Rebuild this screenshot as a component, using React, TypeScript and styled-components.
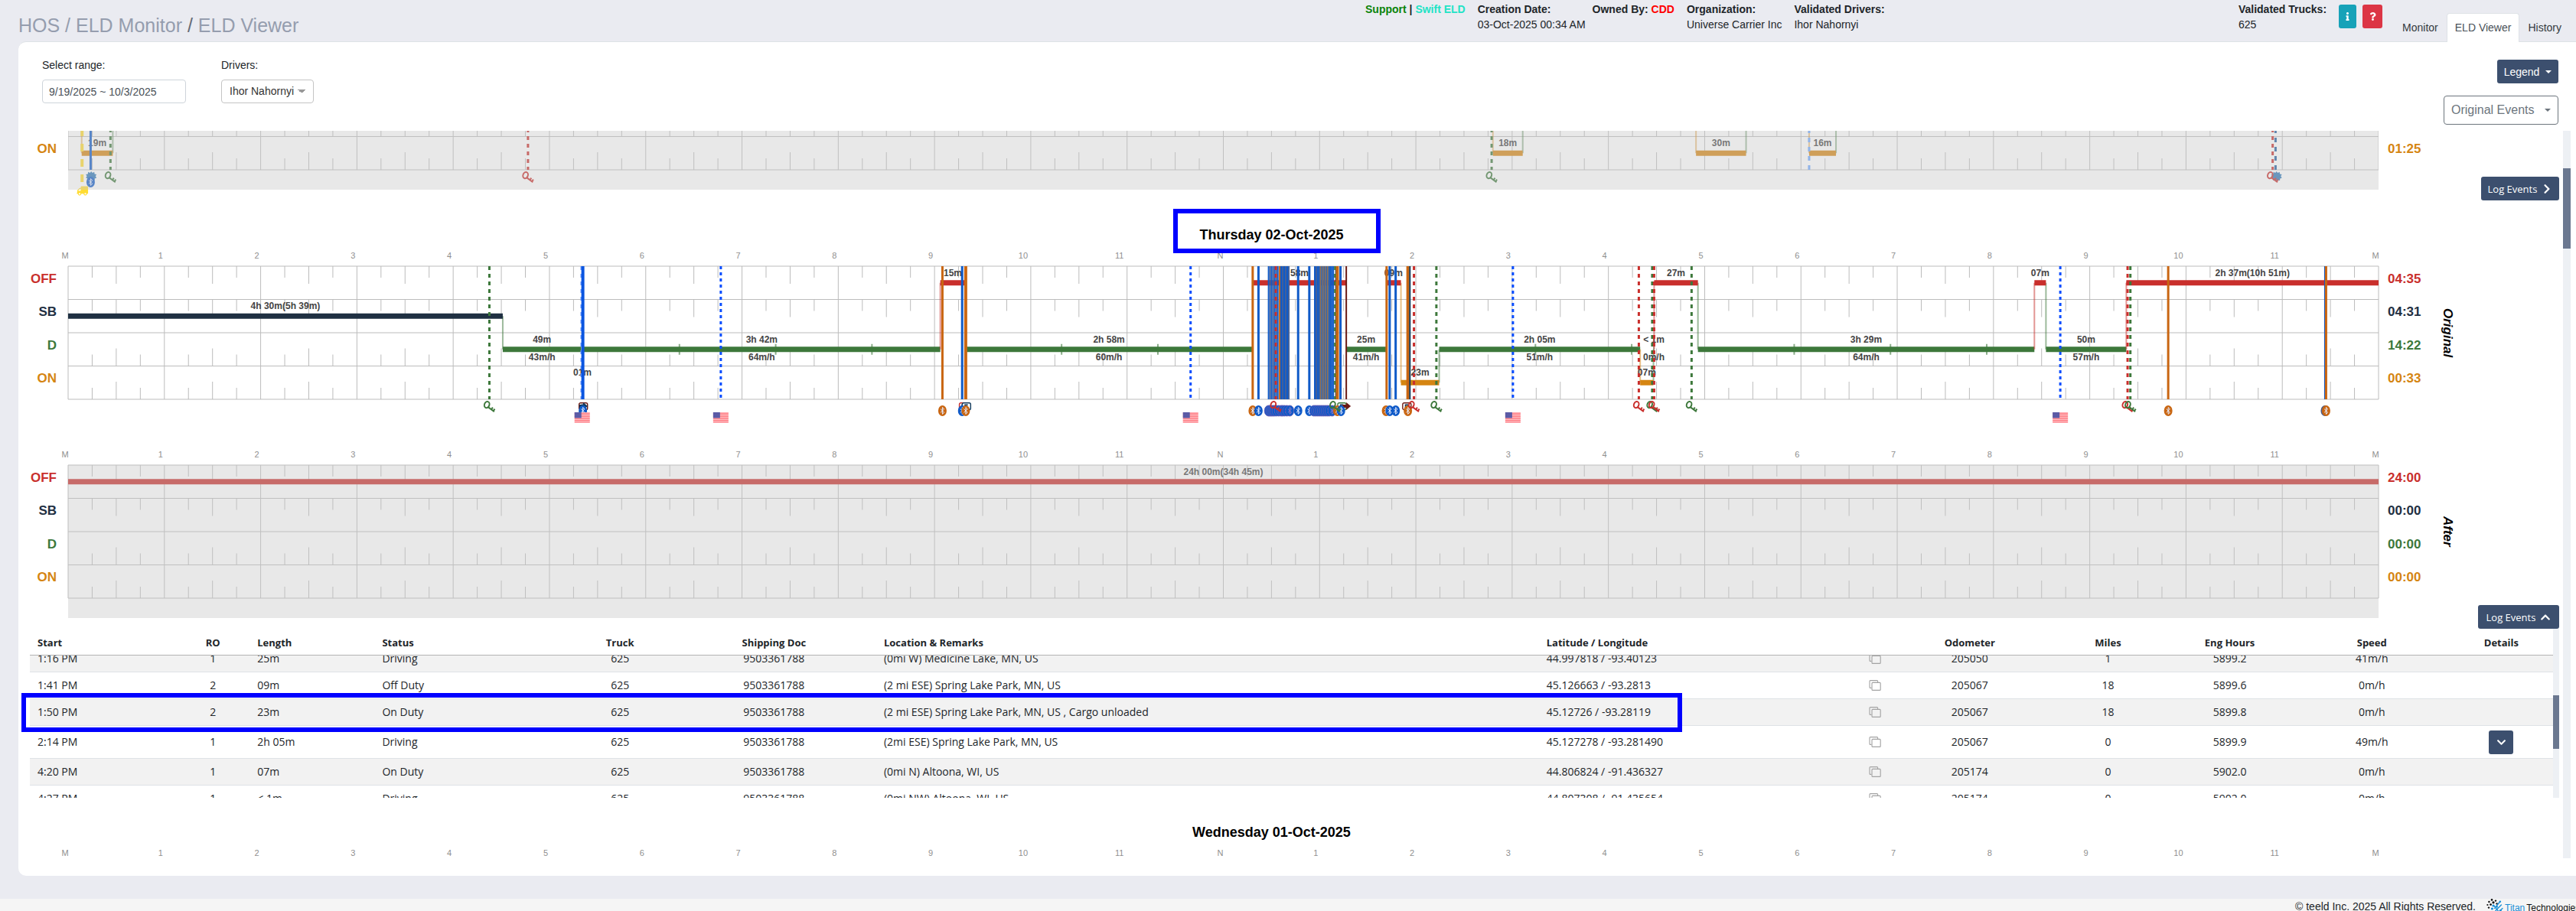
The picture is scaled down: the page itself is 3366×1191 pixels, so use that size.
import React, { useEffect, useRef } from "react";
import styled, { createGlobalStyle } from "styled-components";
import { FaChevronDown, FaChevronRight, FaChevronUp, FaInfo, FaQuestion, FaTruck } from "react-icons/fa";

const ARIAL = '"Liberation Sans", Arial, sans-serif';
const SANS = '"Open Sans", "Noto Sans", sans-serif';

const C = {
  off: "#c92f2c",
  sb: "#1f3042",
  d: "#3d783b",
  on: "#d58512",
  blue: "#0f5ac8",
  bright: "#0a4dff",
  orange: "#c96612",
  navy: "#123a5c",
  maroon: "#6b1a14",
  yellow: "#ffdc32",
  steel: "#1f5c9e",
  btn: "#3c4f6e",
};

const Global = createGlobalStyle`
  * { box-sizing: border-box; }
  html, body { margin: 0; overflow: hidden; }
  body { background: #eaebf1; color: #212529; font: 14px/20px ${ARIAL}; }
  button, input, select { font: inherit; color: inherit; margin: 0; }
`;

/* ---------- page frame ---------- */

const Page = styled.div`
  height: 100vh;
  overflow: hidden;
`;

const Header = styled.header`
  display: flex;
  height: 55px;
  padding: 0 8px 0 24px;
`;

const Crumbs = styled.nav`
  flex: 0 1 calc(53% - 7px);
  padding-top: 18px;
  font-size: 25px;
  line-height: 30px;
  color: #666b76;
  white-space: nowrap;
  a { color: #959dae; text-decoration: none; }
`;

const Info = styled.div<{ $gap?: number }>`
  padding-top: 2px;
  margin-right: ${(p) => p.$gap ?? 16}px;
  white-space: nowrap;
`;

const Strong = styled.div`
  font-weight: 700;
`;

const Tint = styled.span<{ $color: string }>`
  color: ${(p) => p.$color};
`;

const HeaderRight = styled.div`
  display: flex;
  margin-left: auto;
`;

const HelpButtons = styled.div`
  display: flex;
  gap: 8px;
  padding-top: 6px;
  margin-right: 15px;
`;

const HelpButton = styled.button<{ $bg: string; $w: number }>`
  display: flex;
  align-items: center;
  justify-content: center;
  width: ${(p) => p.$w}px;
  height: 31px;
  padding: 0;
  border: 0;
  border-radius: 3px;
  background: ${(p) => p.$bg};
  color: #fff;
  font-size: 11px;
`;

const Tabs = styled.nav`
  position: relative;
  z-index: 1;
  display: flex;
  padding-top: 17px;
`;

const Tab = styled.a<{ $active?: boolean }>`
  height: 38px;
  padding: 8px 10px;
  border: 1px solid ${(p) => (p.$active ? "#dee2e6" : "transparent")};
  border-bottom: 0;
  border-radius: 4px 4px 0 0;
  background: ${(p) => (p.$active ? "#fff" : "transparent")};
  color: ${(p) => (p.$active ? "#495057" : "#343a40")};
  text-decoration: none;
  white-space: nowrap;
`;

const Card = styled.main`
  margin: -1px 0 0 24px;
  padding: 23px 7px 23px 0;
  border-top: 1px solid #dee2e6;
  border-radius: 10px 0 0 10px;
  background: #fff;
`;

const Controls = styled.div`
  display: flex;
  align-items: flex-start;
  gap: 46px;
  height: 93px;
  padding: 0 16px 0 31px;
`;

const Field = styled.label`
  display: flex;
  flex-direction: column;
  align-items: flex-start;
  gap: 11px;
  line-height: 15px;
`;

const RangeInput = styled.input`
  width: 188px;
  height: 31px;
  padding: 0 8px;
  border: 1px solid #ced4da;
  border-radius: 4px;
  background: #fff;
  color: #495057;
`;

const DriverSelect = styled.select`
  appearance: none;
  width: 121px;
  height: 31px;
  padding: 0 20px 0 10px;
  border: 1px solid #c4c4c4;
  border-radius: 4px;
  background-color: #fff;
  background-image: linear-gradient(to top right, transparent 50%, #999 50%),
    linear-gradient(to top left, transparent 50%, #999 50%);
  background-repeat: no-repeat;
  background-position: right 15px center, right 10px center;
  background-size: 5px 5px;
  color: #333;
`;

const ControlButtons = styled.div`
  display: flex;
  flex-direction: column;
  align-items: flex-end;
  gap: 16px;
  margin-left: auto;
`;

const Button = styled.button`
  display: flex;
  align-items: center;
  justify-content: center;
  gap: 8px;
  height: 31px;
  padding: 0 9px;
  border: 0;
  border-radius: 3px;
  background: ${C.btn};
  color: #fff;
  white-space: nowrap;
`;

const LegendButton = styled(Button)`
  width: 80px;
`;

const LogButton = styled(Button)<{ $w: number }>`
  width: ${(p) => p.$w}px;
  padding: 0;
  font: 13px/20px ${SANS};
  gap: 6px;
`;

const RowButton = styled(Button)`
  display: inline-flex;
  width: 32px;
  padding: 0;
  vertical-align: middle;
`;

const OutlineButton = styled(Button)`
  width: 150px;
  height: 38px;
  justify-content: space-between;
  border: 1px solid #6c757d;
  border-radius: 4px;
  background: #fff;
  color: #6c757d;
  font-size: 16px;
`;

const Caret = styled.span`
  border: 4px solid transparent;
  border-top-color: currentColor;
  border-bottom: 0;
`;

/* ---------- scrolling list of days ---------- */

const Scroller = styled.section`
  display: flex;
  height: calc(100vh - 240px);
  overflow: hidden;
`;

const Days = styled.div`
  flex: 1;
  min-width: 0;
  padding: 0 5px 0 15px;
`;

const Track = styled.div<{ $w: number }>`
  flex: none;
  width: ${(p) => p.$w}px;
  background: #edf0f4;
`;

const Thumb = styled.div<{ $top: number; $h: number }>`
  height: ${(p) => p.$h}px;
  margin-top: ${(p) => p.$top}px;
  background: #6b7890;
`;

const TitleRow = styled.div`
  display: flex;
  justify-content: center;
  padding: 33px 60px 7px 0;
`;

const DayTitle = styled.h2`
  position: relative;
  margin: 0;
  font-size: 18px;
  line-height: 24px;
  color: #000;
`;

const TitleMark = styled.div`
  position: absolute;
  inset: -22px -48px -12px -34px;
  border: 6px solid #0000ff;
`;

const Grid = styled.div<{ $gap?: number }>`
  display: grid;
  grid-template-columns: 50px minmax(0, 1fr) 236px;
  margin-bottom: ${(p) => p.$gap ?? 0}px;
`;

const HourAxis = styled.svg`
  grid-column: 2;
  display: block;
  width: 100%;
  height: 22px;
  overflow: visible;
  font: 11px ${ARIAL};
  fill: #8f8f8f;
`;

const Labels = styled.div<{ $h: number; $pad?: number }>`
  display: grid;
  grid-auto-rows: 1fr;
  grid-column: 1;
  height: ${(p) => p.$h}px;
  padding: ${(p) => p.$pad ?? 0}px 15px 0 0;
`;

const Totals = styled(Labels)`
  padding-right: 0;
  padding-left: 12px;
  width: 82px;
`;

const RowLabel = styled.span<{ $color: string }>`
  display: flex;
  align-items: center;
  margin-left: auto;
  padding-bottom: 10px;
  font-size: 17px;
  font-weight: 700;
  color: ${(p) => p.$color};
`;

const TotalLabel = styled(RowLabel)`
  margin-left: 0;
`;

const Side = styled.div`
  display: flex;
`;

const Vertical = styled.em<{ $h: number }>`
  display: flex;
  align-items: center;
  justify-content: center;
  height: ${(p) => p.$h}px;
  width: 16px;
  writing-mode: vertical-rl;
  font-size: 17px;
  font-weight: 700;
  color: #000;
`;

const SideEnd = styled.div`
  display: flex;
  align-items: flex-end;
  margin-left: auto;
`;

const ChartSvg = styled.svg<{ $h: number; $clip?: boolean }>`
  display: block;
  width: 100%;
  height: ${(p) => p.$h}px;
  overflow: ${(p) => (p.$clip ? "hidden" : "visible")};
  font: 700 12px ${ARIAL};
`;

/* ---------- chart ---------- */

const ROW = 174 / 4;
const pct = (h: number) => `${(h / 24) * 100}%`;
type Status = "off" | "sb" | "d" | "on";
const order: Status[] = ["off", "sb", "d", "on"];
const yOf = (s: Status) => (order.indexOf(s) + 0.5) * ROW;

type Segment = { s: Status; a: number; b: number; label?: string; speed?: string; from?: Status; to?: Status };
type VLine = { h: number; c: string; w?: number; dash?: string; end?: number };
type Mark = { h: number; k: "key" | "bt" | "flag" | "cam" | "arrow" | "burst" | "truck"; c?: string; y?: number };

const hourNames = ["M", "1", "2", "3", "4", "5", "6", "7", "8", "9", "10", "11", "N", "1", "2", "3", "4", "5", "6", "7", "8", "9", "10", "11", "M"];

const Hours = () => (
  <HourAxis>
    {hourNames.map((n, i) => (
      <text key={i} x={pct(i)} dx={/\d/.test(n) ? -5 * n.length : -4} y={12} textAnchor="middle">
        {n}
      </text>
    ))}
  </HourAxis>
);

const Backdrop = () => (
  <g stroke="#bcbcbc">
    {[0, 1, 2, 3, 4].map((r) => (
      <line key={r} x1="0" x2="100%" y1={r * ROW} y2={r * ROW} />
    ))}
    {Array.from({ length: 97 }, (_, q) => {
      const x = pct(q / 4);
      if (q % 4 === 0) return <line key={q} x1={x} x2={x} y1={0} y2={174} />;
      const len = q % 2 === 0 ? 23 : 15;
      return (
        <React.Fragment key={q}>
          {[0, 1].map((r) => (
            <line key={r} x1={x} x2={x} y1={r * ROW} y2={r * ROW + len} />
          ))}
          {[3, 4].map((r) => (
            <line key={r} x1={x} x2={x} y1={r * ROW} y2={r * ROW - len} />
          ))}
        </React.Fragment>
      );
    })}
  </g>
);

const Segments = ({ items }: { items: Segment[] }) => (
  <>
    {items.map((g, i) => {
      const y = yOf(g.s);
      const mid = pct((g.a + g.b) / 2);
      const notches = [];
      if (g.s === "d") for (let n = g.a + 1; n < g.b - 0.05; n += 1) notches.push(n);
      return (
        <g key={i}>
          {g.from && (
            <line x1={pct(g.a)} x2={pct(g.a)} y1={yOf(g.from)} y2={y} stroke={C[g.s]} strokeWidth={2} opacity={0.5} />
          )}
          {g.to && (
            <line x1={pct(g.b)} x2={pct(g.b)} y1={yOf(g.to)} y2={y} stroke={C[g.to]} strokeWidth={2} opacity={0.5} />
          )}
          {notches.map((n) => (
            <line key={n} x1={pct(n)} x2={pct(n)} y1={y - 7} y2={y + 7} stroke={C.d} strokeWidth={2} opacity={0.6} />
          ))}
          <line x1={pct(g.a)} x2={pct(g.b)} y1={y} y2={y} stroke={C[g.s]} strokeWidth={7} />
          {g.label && (
            <text x={mid} y={y - 9} textAnchor="middle" fill="#444">
              {g.label}
            </text>
          )}
          {g.speed && (
            <text x={mid} y={y + 14} textAnchor="middle" fill="#444">
              {g.speed}
            </text>
          )}
        </g>
      );
    })}
  </>
);

const VLines = ({ items }: { items: VLine[] }) => (
  <>
    {items.map((l, i) => (
      <line
        key={i}
        x1={pct(l.h)}
        x2={pct(l.h)}
        y1={0}
        y2={l.end ?? 174}
        stroke={l.c}
        strokeWidth={l.w ?? 3}
        strokeDasharray={l.dash}
      />
    ))}
  </>
);

const Glyph = ({ m }: { m: Mark }) => {
  const c = m.c ?? C.blue;
  if (m.k === "key")
    return (
      <g transform="translate(-8 176)" fill="none" stroke={c} strokeWidth={2}>
        <ellipse cx={4.8} cy={5.2} rx={3.2} ry={4.2} transform="rotate(20 5 5)" />
        <path d="M6.6 8.4 14.4 14.2M10.6 11.2 12.4 8.6M13.2 13.2 15 10.6" />
      </g>
    );
  if (m.k === "bt")
    return (
      <g transform={`translate(0 ${m.y ?? 189})`}>
        <ellipse rx={5.5} ry={7} fill={c} stroke={m.c ? "none" : "#6a58b0"} strokeWidth={0.8} />
        <path d="M-2.4-2.4 2.3 2.2 0 4.4V-4.4L2.3-2.2-2.4 2.4" fill="none" stroke={m.c ? "#e6ecff" : "#8a74c4"} strokeWidth={1} />
      </g>
    );
  if (m.k === "flag")
    return (
      <g transform="translate(-10 191)">
        <rect width={20} height={14} fill="#ffe3e5" />
        {[0, 1, 2, 3, 4, 5].map((i) => (
          <rect key={i} y={0.6 + i * 2.3} width={20} height={1.2} fill="#ff5d66" />
        ))}
        <rect width={9} height={7.5} fill="#5b5ba6" />
      </g>
    );
  if (m.k === "cam")
    return (
      <g transform="translate(-6 178)">
        <rect x={0.7} y={0.7} width={11} height={9} rx={2} fill="#fff" stroke={c} strokeWidth={1.4} />
        <path d="M8 3.4H4.4v4H8" fill="none" stroke={C.navy} strokeWidth={1.6} />
      </g>
    );
  if (m.k === "arrow") return <path transform="translate(-5 178)" d="M0 3H5V0L11 5 5 10V7H0Z" fill={c} />;
  if (m.k === "burst")
    return (
      <path
        transform="translate(0 183)"
        fill={c}
        d="M0-7 1.6-5 4-6.2 4.4-3.6 7-3 5.6-.8 7 1.6 4.6 2.4 4.4 5 2 4.8 0 7-2 4.8-4.4 5-4.6 2.4-7 1.6-5.6-.8-7-3-4.4-3.6-4-6.2-1.6-5Z"
      />
    );
  return (
    <g transform="translate(8 194) scale(-1 1)">
      <FaTruck size={15} color={c} />
    </g>
  );
};

const Marks = ({ items }: { items: Mark[] }) => (
  <>
    {items.map((m, i) => (
      <svg key={i} x={pct(m.h)} y={0} overflow="visible">
        <Glyph m={m} />
      </svg>
    ))}
  </>
);

type ChartProps = {
  segments: Segment[];
  lines?: VLine[];
  marks?: Mark[];
  shaded?: boolean;
  height?: number;
  shift?: number;
};

const Chart = ({ segments, lines = [], marks = [], shaded, height = 214, shift = 0 }: ChartProps) => (
  <ChartSvg $h={height} $clip={shift > 0}>
    <g transform={`translate(0 ${-shift})`}>
      <Backdrop />
      <Segments items={segments} />
      <VLines items={lines} />
      <Marks items={marks} />
      {shaded && <rect width="100%" height={200} fill="rgba(198,198,198,.4)" />}
    </g>
  </ChartSvg>
);

/* ---------- chart data ---------- */

const DASH = "5 5";
const DOTS = "4 4";

const fridaySegments: Segment[] = [
  { s: "on", a: 0.141, b: 0.464, label: "19m", from: "off", to: "d" },
  { s: "on", a: 14.8, b: 15.11, label: "18m", from: "off", to: "d" },
  { s: "on", a: 16.91, b: 17.43, label: "30m", from: "off", to: "d" },
  { s: "on", a: 18.085, b: 18.364, label: "16m", from: "off", to: "d" },
];
const fridayLines: VLine[] = [
  { h: 0.145, c: C.yellow, w: 4, dash: "10 10", end: 190 },
  { h: 0.234, c: C.blue },
  { h: 0.44, c: C.d, dash: DASH },
  { h: 4.777, c: C.off, dash: DASH },
  { h: 14.787, c: C.d, dash: DASH },
  { h: 18.085, c: "#6ea8ff", dash: "6 6" },
  { h: 22.9, c: C.off, dash: DASH },
  { h: 22.93, c: C.steel, dash: "6 6" },
];
const fridayMarks: Mark[] = [
  { h: 0.145, k: "truck", c: C.yellow },
  { h: 0.24, k: "burst", c: "#2f79b8" },
  { h: 0.234, k: "bt", c: C.blue, y: 190 },
  { h: 0.44, k: "key", c: C.d },
  { h: 4.777, k: "key", c: C.off },
  { h: 14.787, k: "key", c: C.d },
  { h: 22.94, k: "burst", c: "#2f79b8" },
  { h: 22.9, k: "key", c: C.off },
];

const thursdaySegments: Segment[] = [
  { s: "sb", a: 0, b: 4.515, label: "4h 30m(5h 39m)", to: "d" },
  { s: "d", a: 4.515, b: 5.33, label: "49m", speed: "43m/h" },
  { s: "on", a: 5.335, b: 5.35, label: "01m" },
  { s: "d", a: 5.35, b: 9.06, label: "3h 42m", speed: "64m/h" },
  { s: "off", a: 9.06, b: 9.32, label: "15m", from: "d" },
  { s: "d", a: 9.32, b: 12.305, label: "2h 58m", speed: "60m/h" },
  { s: "off", a: 12.305, b: 13.277, label: "58m" },
  { s: "d", a: 13.277, b: 13.69, label: "25m", speed: "41m/h" },
  { s: "off", a: 13.69, b: 13.845, label: "09m", to: "on" },
  { s: "on", a: 13.845, b: 14.242, label: "23m", to: "d" },
  { s: "d", a: 14.242, b: 16.33, label: "2h 05m", speed: "51m/h" },
  { s: "on", a: 16.33, b: 16.468, label: "07m", from: "d", to: "d" },
  { s: "d", a: 16.468, b: 16.475, label: "< 1m", speed: "0m/h" },
  { s: "off", a: 16.475, b: 16.93, label: "27m", from: "d", to: "d" },
  { s: "d", a: 16.93, b: 20.425, label: "3h 29m", speed: "64m/h" },
  { s: "off", a: 20.425, b: 20.545, label: "07m", from: "d", to: "d" },
  { s: "d", a: 20.545, b: 21.38, label: "50m", speed: "57m/h" },
  { s: "off", a: 21.38, b: 24, label: "2h 37m(10h 51m)", from: "d" },
];

const run = (from: number, to: number, step: number, colors: string[], w: number): VLine[] => {
  const out: VLine[] = [];
  let i = 0;
  for (let h = from; h < to; h += step, i += 1) out.push({ h, c: colors[i % colors.length], w });
  return out;
};

const thursdayLines: VLine[] = [
  { h: 4.376, c: C.d, dash: DASH },
  { h: 5.33, c: "#6d9bff", w: 2, dash: DASH },
  { h: 5.347, c: "#0a55e0", w: 4 },
  { h: 6.78, c: C.bright, dash: DOTS },
  { h: 9.082, c: C.orange },
  { h: 9.287, c: C.blue },
  { h: 9.324, c: C.orange, w: 4 },
  { h: 11.66, c: C.bright, dash: DOTS },
  { h: 12.305, c: C.orange },
  { h: 12.365, c: C.blue },
  ...run(12.47, 12.57, 0.016, [C.blue, "#3f5f9c"], 2),
  { h: 12.585, c: C.orange, w: 2 },
  ...run(12.6, 12.69, 0.016, [C.blue, "#3f5f9c"], 2),
  { h: 12.545, c: C.off, dash: DASH },
  { h: 12.777, c: C.blue },
  { h: 12.893, c: C.blue },
  ...run(12.95, 13.0, 0.016, [C.blue, "#3f5f9c"], 2),
  ...run(13.0, 13.11, 0.012, ["#2d63b0", "#96714f"], 2),
  ...run(13.11, 13.15, 0.016, [C.blue], 2),
  { h: 13.17, c: C.navy, w: 2 },
  { h: 13.162, c: C.d, dash: DASH },
  { h: 13.184, c: C.orange, w: 4 },
  { h: 13.217, c: C.blue },
  { h: 13.277, c: C.maroon, w: 2 },
  { h: 13.696, c: C.orange },
  { h: 13.728, c: C.blue },
  { h: 13.79, c: C.blue },
  { h: 13.917, c: C.orange, w: 4 },
  { h: 13.938, c: C.navy, w: 2 },
  { h: 13.98, c: C.off, dash: DASH },
  { h: 14.213, c: C.d, dash: DASH },
  { h: 15.008, c: C.bright, dash: DOTS },
  { h: 16.316, c: C.off, dash: DASH },
  { h: 16.455, c: C.d, dash: DASH },
  { h: 16.475, c: C.off, dash: DASH },
  { h: 16.864, c: C.d, dash: DASH },
  { h: 20.694, c: C.bright, dash: DOTS },
  { h: 21.393, c: C.off, dash: DASH },
  { h: 21.422, c: C.d, dash: DASH },
  { h: 21.815, c: C.orange },
  { h: 23.443, c: C.blue, w: 2 },
  { h: 23.455, c: C.orange },
];

const bts = (...hs: number[]): Mark[] => hs.map((h) => ({ h, k: "bt" }));

const thursdayMarks: Mark[] = [
  { h: 4.376, k: "key", c: C.d },
  { h: 5.35, k: "cam", c: C.maroon },
  { h: 5.35, k: "arrow", c: C.navy },
  { h: 5.347, k: "bt", c: C.blue },
  { h: 5.34, k: "flag" },
  { h: 6.78, k: "flag" },
  { h: 9.082, k: "bt", c: C.orange },
  { h: 9.3, k: "cam", c: C.off },
  { h: 9.33, k: "cam", c: C.navy },
  { h: 9.287, k: "bt", c: C.blue },
  { h: 9.324, k: "bt", c: C.orange },
  { h: 11.66, k: "flag" },
  { h: 12.305, k: "bt", c: C.orange },
  { h: 12.365, k: "bt", c: C.blue },
  ...bts(12.47, 12.485, 12.5, 12.515, 12.53, 12.55, 12.575, 12.6, 12.615, 12.635, 12.66, 12.69),
  { h: 12.777, k: "bt", c: C.blue },
  { h: 12.893, k: "bt", c: C.blue },
  ...bts(12.94, 12.96, 12.98, 13.0, 13.02, 13.04, 13.06, 13.08, 13.1, 13.13),
  { h: 12.545, k: "key", c: C.off },
  { h: 13.23, k: "cam", c: C.d },
  { h: 13.277, k: "arrow", c: C.maroon },
  { h: 13.184, k: "bt", c: C.orange },
  { h: 13.222, k: "bt", c: C.blue },
  { h: 13.162, k: "key", c: C.d },
  { h: 13.69, k: "bt", c: C.orange },
  { h: 13.728, k: "bt", c: C.blue },
  { h: 13.79, k: "bt", c: C.blue },
  { h: 13.905, k: "cam", c: C.maroon },
  { h: 13.917, k: "bt", c: C.orange },
  { h: 13.98, k: "key", c: C.off },
  { h: 14.213, k: "key", c: C.d },
  { h: 15.008, k: "flag" },
  { h: 16.316, k: "key", c: C.off },
  { h: 16.455, k: "key", c: C.d },
  { h: 16.475, k: "key", c: C.off },
  { h: 16.864, k: "key", c: C.d },
  { h: 20.694, k: "flag" },
  { h: 21.393, k: "key", c: C.off },
  { h: 21.422, k: "key", c: C.d },
  { h: 21.815, k: "bt", c: C.orange },
  { h: 23.443, k: "bt", c: "#4a5a86" },
  { h: 23.455, k: "bt", c: C.orange },
];

const rows: [string, string][] = [
  ["OFF", C.off],
  ["SB", C.sb],
  ["D", C.d],
  ["ON", C.on],
];

const RowNames = () => (
  <Labels $h={174}>
    {rows.map(([n, c]) => (
      <RowLabel key={n} $color={c}>
        {n}
      </RowLabel>
    ))}
  </Labels>
);

const RowTotals = ({ values }: { values: string[] }) => (
  <Totals $h={174}>
    {values.map((v, i) => (
      <TotalLabel key={i} $color={rows[i][1]}>
        {v}
      </TotalLabel>
    ))}
  </Totals>
);

/* ---------- events table ---------- */

const TableWrap = styled.div`
  position: relative;
  display: flex;
  height: 221px;
`;

const TableScroll = styled.div`
  flex: 1;
  overflow: hidden;
`;

const RowMark = styled.div`
  position: absolute;
  left: -11px;
  top: 84px;
  width: calc(66% - 11px);
  height: 51px;
  border: 6px solid #0000ff;
  pointer-events: none;
`;

const EventTable = styled.table`
  width: 100%;
  table-layout: fixed;
  border-collapse: separate;
  border-spacing: 0;
  font: 14px/20px ${SANS};
`;

const Col = styled.col<{ $w: number }>`
  width: ${(p) => p.$w}%;
`;

const Th = styled.th<{ $center?: boolean }>`
  position: sticky;
  top: 0;
  z-index: 1;
  height: 35px;
  padding: 2px 10px 0;
  border-bottom: 1px solid #b3b3b3;
  background: #fff;
  font-size: 13px;
  text-align: ${(p) => (p.$center ? "center" : "left")};
  white-space: nowrap;
`;

const Tr = styled.tr<{ $shade?: boolean }>`
  background: ${(p) => (p.$shade ? "#f2f2f2" : "#fff")};
`;

const Td = styled.td<{ $center?: boolean; $tall?: boolean }>`
  height: ${(p) => (p.$tall ? 43 : 35)}px;
  padding: 0 10px;
  border-bottom: 1px solid #dee2e6;
  text-align: ${(p) => (p.$center ? "center" : "left")};
  white-space: nowrap;
`;

const Coords = styled.div`
  display: flex;
  align-items: center;
  justify-content: space-between;
`;

const CopyButton = styled.button`
  display: flex;
  padding: 0;
  border: 0;
  background: none;
  color: #a3a3a3;
`;

const CopyIcon = () => (
  <svg width="16" height="14" viewBox="0 0 16 14" fill="none" stroke="currentColor" strokeWidth="1.1">
    <path d="M3.4 10.4H2Q1 10.4 1 9.4V1.6Q1 .6 2 .6H10.6Q11.6 .6 11.6 1.6V3" />
    <rect x="4" y="3.4" width="11.2" height="10" rx="1" />
  </svg>
);

const columns: [string, number, boolean][] = [
  ["Start", 191, false],
  ["RO", 96, true],
  ["Length", 163, false],
  ["Status", 253, false],
  ["Truck", 135, true],
  ["Shipping Doc", 267, true],
  ["Location & Remarks", 865, false],
  ["Latitude / Longitude", 457, false],
  ["Odometer", 211, true],
  ["Miles", 150, true],
  ["Eng Hours", 168, true],
  ["Speed", 203, true],
  ["Details", 135, true],
];
const totalWidth = columns.reduce((n, c) => n + c[1], 0);

const events = [
  ["1:16 PM", "1", "25m", "Driving", "(0mi W) Medicine Lake, MN, US", "44.997818 / -93.40123", "205050", "1", "5899.2", "41m/h"],
  ["1:41 PM", "2", "09m", "Off Duty", "(2 mi ESE) Spring Lake Park, MN, US", "45.126663 / -93.2813", "205067", "18", "5899.6", "0m/h"],
  ["1:50 PM", "2", "23m", "On Duty", "(2 mi ESE) Spring Lake Park, MN, US , Cargo unloaded", "45.12726 / -93.28119", "205067", "18", "5899.8", "0m/h"],
  ["2:14 PM", "1", "2h 05m", "Driving", "(2mi ESE) Spring Lake Park, MN, US", "45.127278 / -93.281490", "205067", "0", "5899.9", "49m/h"],
  ["4:20 PM", "1", "07m", "On Duty", "(0mi N) Altoona, WI, US", "44.806824 / -91.436327", "205174", "0", "5902.0", "0m/h"],
  ["4:27 PM", "1", "< 1m", "Driving", "(0mi NW) Altoona, WI, US", "44.807308 / -91.435654", "205174", "0", "5902.0", "0m/h"],
];

const Events = () => {
  const ref = useRef<HTMLDivElement>(null);
  useEffect(() => {
    if (ref.current) ref.current.scrollTop = 13;
  }, []);
  return (
    <TableWrap>
      <TableScroll ref={ref}>
        <EventTable>
          <colgroup>
            {columns.map(([n, w]) => (
              <Col key={n} $w={(w / totalWidth) * 100} />
            ))}
          </colgroup>
          <thead>
            <tr>
              {columns.map(([n, , center]) => (
                <Th key={n} scope="col" $center={center}>
                  {n}
                </Th>
              ))}
            </tr>
          </thead>
          <tbody>
            {events.map(([start, ro, len, status, place, coord, odo, miles, eng, speed], i) => (
              <Tr key={start} $shade={i % 2 === 0}>
                <Td>{start}</Td>
                <Td $center>{ro}</Td>
                <Td>{len}</Td>
                <Td>{status}</Td>
                <Td $center>625</Td>
                <Td $center>9503361788</Td>
                <Td>{place}</Td>
                <Td>
                  <Coords>
                    {coord}
                    <CopyButton aria-label="Copy coordinates">
                      <CopyIcon />
                    </CopyButton>
                  </Coords>
                </Td>
                <Td $center>{odo}</Td>
                <Td $center>{miles}</Td>
                <Td $center>{eng}</Td>
                <Td $center>{speed}</Td>
                <Td $center $tall={i === 3}>
                  {i === 3 && (
                    <RowButton aria-label="Show details">
                      <FaChevronDown size={13} />
                    </RowButton>
                  )}
                </Td>
              </Tr>
            ))}
          </tbody>
        </EventTable>
      </TableScroll>
      <Track $w={8}>
        <Thumb $top={87} $h={70} />
      </Track>
      <RowMark />
    </TableWrap>
  );
};

/* ---------- footer ---------- */

const Footer = styled.footer`
  display: flex;
  justify-content: flex-end;
  margin-top: 30px;
  height: 20px;
  background: #f5f5f5;
  white-space: nowrap;
`;

const Copyright = styled.span`
  margin-right: 14px;
`;

const Brand = styled.a`
  display: flex;
  gap: 2px;
  width: 117px;
  color: #111;
  font-size: 12px;
  line-height: 24px;
  text-decoration: none;
  svg { flex: none; }
`;

const BrandLogo = () => (
  <svg width="22" height="20" viewBox="0 0 22 20">
    <g fill="#111">
      <circle cx="7" cy="1.4" r="1.3" />
      <circle cx="12" cy="2.6" r="1.2" />
      <circle cx="3.4" cy="4" r="1.2" />
      <circle cx="9" cy="4.8" r="1.6" />
      <circle cx="1.4" cy="8" r="1.1" />
      <circle cx="5.6" cy="7.6" r="1.4" />
      <circle cx="13.6" cy="6.4" r="1.2" />
      <circle cx="3" cy="11.6" r="1.2" />
    </g>
    <g fill="none" stroke="#1b8fd6" strokeWidth="1.4" strokeLinecap="round">
      <path d="M17.6 4 10.6 12.4M19.4 8 12 15.4M21 12.6 15.4 17.6M9.4 8.6 16.6 17.6" />
    </g>
    <g fill="#1b8fd6">
      <circle cx="9" cy="9" r="1.6" />
      <circle cx="7.4" cy="13" r="1.6" />
      <circle cx="17.8" cy="3.8" r="1.3" />
      <circle cx="13.6" cy="10.4" r="1.4" />
      <circle cx="18.4" cy="15.4" r="1.5" />
    </g>
  </svg>
);

export default function App() {
  return (
    <Page>
      <Global />
      <Header>
        <Crumbs aria-label="Breadcrumb">
          <a href="#hos">HOS / ELD Monitor</a> / <a href="#viewer">ELD Viewer</a>
        </Crumbs>
        <Info>
          <Strong>
            <Tint $color="#0a840a">Support</Tint> | <Tint $color="#22e3c6">Swift ELD</Tint>
          </Strong>
        </Info>
        <Info $gap={9}>
          <Strong>Creation Date:</Strong>
          03-Oct-2025 00:34 AM
        </Info>
        <Info>
          <Strong>
            Owned By: <Tint $color="#ff0000">CDD</Tint>
          </Strong>
        </Info>
        <Info>
          <Strong>Organization:</Strong>
          Universe Carrier Inc
        </Info>
        <Info>
          <Strong>Validated Drivers:</Strong>
          Ihor Nahornyi
        </Info>
        <HeaderRight>
          <Info>
            <Strong>Validated Trucks:</Strong>
            625
          </Info>
          <HelpButtons>
            <HelpButton $bg="#17a2b8" $w={23} aria-label="Information">
              <FaInfo />
            </HelpButton>
            <HelpButton $bg="#dc3545" $w={26} aria-label="Help">
              <FaQuestion />
            </HelpButton>
          </HelpButtons>
          <Tabs>
            <Tab href="#monitor">Monitor</Tab>
            <Tab href="#eld" $active>
              ELD Viewer
            </Tab>
            <Tab href="#history">History</Tab>
          </Tabs>
        </HeaderRight>
      </Header>

      <Card>
        <Controls>
          <Field>
            Select range:
            <RangeInput type="text" defaultValue="9/19/2025 ~ 10/3/2025" />
          </Field>
          <Field>
            Drivers:
            <DriverSelect>
              <option>Ihor Nahornyi</option>
            </DriverSelect>
          </Field>
          <ControlButtons>
            <LegendButton>
              Legend <Caret />
            </LegendButton>
            <OutlineButton>
              Original Events <Caret />
            </OutlineButton>
          </ControlButtons>
        </Controls>

        <Scroller>
          <Days>
            <Grid>
              <Labels $h={51} $pad={7}>
                <RowLabel $color={C.on}>ON</RowLabel>
              </Labels>
              <Chart segments={fridaySegments} lines={fridayLines} marks={fridayMarks} shaded height={91} shift={123} />
              <Side>
                <Totals $h={51} $pad={7}>
                  <TotalLabel $color={C.on}>01:25</TotalLabel>
                </Totals>
                <SideEnd>
                  <LogButton $w={102}>
                    Log Events <FaChevronRight size={14} />
                  </LogButton>
                </SideEnd>
              </Side>
            </Grid>

            <TitleRow>
              <DayTitle>
                Thursday 02-Oct-2025
                <TitleMark />
              </DayTitle>
            </TitleRow>
            <Grid $gap={24}>
              <Hours />
              <RowNames />
              <Chart segments={thursdaySegments} lines={thursdayLines} marks={thursdayMarks} />
              <Side>
                <RowTotals values={["04:35", "04:31", "14:22", "00:33"]} />
                <Vertical $h={174}>Original</Vertical>
              </Side>
            </Grid>
            <Grid>
              <Hours />
              <RowNames />
              <Chart segments={[{ s: "off", a: 0, b: 24, label: "24h 00m(34h 45m)" }]} shaded />
              <Side>
                <RowTotals values={["24:00", "00:00", "00:00", "00:00"]} />
                <Vertical $h={174}>After</Vertical>
                <SideEnd>
                  <LogButton $w={106}>
                    Log Events <FaChevronUp size={14} />
                  </LogButton>
                </SideEnd>
              </Side>
            </Grid>
            <Events />

            <TitleRow>
              <DayTitle>Wednesday 01-Oct-2025</DayTitle>
            </TitleRow>
            <Grid>
              <Hours />
            </Grid>
          </Days>
          <Track $w={10}>
            <Thumb $top={49} $h={105} />
          </Track>
        </Scroller>
      </Card>

      <Footer>
        <Copyright>© teeld Inc. 2025 All Rights Reserved.</Copyright>
        <Brand href="#titan">
          <BrandLogo />
          <Tint $color="#1b8fd6">Titan</Tint>
          <span>Technologies</span>
        </Brand>
      </Footer>
    </Page>
  );
}
